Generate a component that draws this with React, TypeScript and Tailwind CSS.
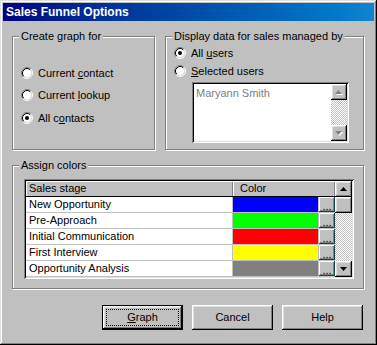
import React from 'react';

// win98 bevels
const raised =
    'shadow-[inset_-1px_-1px_0_#000,inset_1px_1px_0_#fff,inset_-2px_-2px_0_#808080,inset_2px_2px_0_#dfdfdf]';
const sunken =
    'shadow-[inset_1px_1px_0_#808080,inset_-1px_-1px_0_#fff,inset_2px_2px_0_#000,inset_-2px_-2px_0_#dfdfdf]';
const checker =
    'bg-[image:repeating-conic-gradient(#fff_0_25%,#c0c0c0_0_50%)] bg-[length:2px_2px]';

type Stage = {
    name: string;
    color: string;
};

const stages: Stage[] = [
    { name: 'New Opportunity', color: 'bg-[#0000ff]' },
    { name: 'Pre-Approach', color: 'bg-[#00ff00]' },
    { name: 'Initial Communication', color: 'bg-[#ff0000]' },
    { name: 'First Interview', color: 'bg-[#ffff00]' },
    { name: 'Opportunity Analysis', color: 'bg-[#808080]' },
];

function Radio({ checked }: { checked?: boolean }) {
    return (
        <svg width="12" height="12" viewBox="0 0 12 12" className="shrink-0">
            <circle cx="6" cy="6" r="4.5" fill="#fff" />
            <path d="M2.11 9.89A5.5 5.5 0 0 1 9.89 2.11" fill="none" stroke="#808080" />
            <path d="M9.89 2.11A5.5 5.5 0 0 1 2.11 9.89" fill="none" stroke="#fff" />
            <path d="M2.82 9.18A4.5 4.5 0 0 1 9.18 2.82" fill="none" stroke="#000" />
            <path d="M9.18 2.82A4.5 4.5 0 0 1 2.82 9.18" fill="none" stroke="#dfdfdf" />
            {checked && <circle cx="6" cy="6" r="2" fill="#000" />}
        </svg>
    );
}

function Arrow({ down, disabled }: { down?: boolean; disabled?: boolean }) {
    const d = down ? 'M0 0h7l-3.5 4z' : 'M3.5 0l3.5 4h-7z';
    return (
        <svg width="8" height="5" viewBox="0 0 8 5">
            {disabled && <path d={d} fill="#fff" transform="translate(1 1)" />}
            <path d={d} fill={disabled ? '#808080' : '#000'} />
        </svg>
    );
}

function Group({ label, className, children }: { label: React.ReactNode; className: string; children?: React.ReactNode }) {
    return (
        <div className={`relative border border-[#808080] shadow-[inset_1px_1px_0_#fff,1px_1px_0_#fff] ${className}`}>
            <span className="absolute -top-[8px] left-[6px] bg-[#c0c0c0] px-[2px] leading-[14px]">{label}</span>
            {children}
        </div>
    );
}

function RadioRow({ checked, children, className }: { checked?: boolean; children: React.ReactNode; className?: string }) {
    return (
        <div className={`flex h-[16px] items-center gap-[5px] ${className ?? ''}`}>
            <Radio checked={checked} />
            <span>{children}</span>
        </div>
    );
}

function Button({ children, isDefault }: { children: React.ReactNode; isDefault?: boolean }) {
    if (isDefault) {
        return (
            <div className="h-[25px] w-[81px] border border-black bg-[#c0c0c0]">
                <div className={`flex h-full w-full items-center justify-center p-[3px] ${raised}`}>
                    <div className="flex h-full w-full items-center justify-center border border-dotted border-black">
                        {children}
                    </div>
                </div>
            </div>
        );
    }
    return (
        <div className={`flex h-[25px] w-[81px] items-center justify-center bg-[#c0c0c0] ${raised}`}>{children}</div>
    );
}

export default function App() {
    return (
        <div
            className={`flex h-[345px] w-[377px] flex-col bg-[#c0c0c0] p-[3px] text-[11px] text-black font-['Liberation_Sans',Arial,sans-serif] shadow-[inset_-1px_-1px_0_#000,inset_1px_1px_0_#dfdfdf,inset_-2px_-2px_0_#808080,inset_2px_2px_0_#fff]`}
        >
            {/* barre de titre */}
            <div className="flex h-[18px] items-center bg-linear-to-r from-[#000080] to-[#1084d0] pl-[3px] text-[12px] font-bold text-white">
                Sales Funnel Options
            </div>

            <div className="flex flex-col pl-[9px] pr-[10px]">
                <div className="mt-[15px] flex gap-[10px]">
                    <Group label="Create graph for" className="h-[114px] w-[143px] pl-[8px] pt-[28px]">
                        <RadioRow>
                            Current <u>c</u>ontact
                        </RadioRow>
                        <RadioRow className="mt-[6px]">
                            Current <u>l</u>ookup
                        </RadioRow>
                        <RadioRow checked className="mt-[7px]">
                            All c<u>o</u>ntacts
                        </RadioRow>
                    </Group>

                    <Group label="Display data for sales managed by" className="h-[114px] w-[199px] pl-[8px] pt-[8px]">
                        <RadioRow checked>
                            All <u>u</u>sers
                        </RadioRow>
                        <RadioRow className="mt-[2px]">
                            <u>S</u>elected users
                        </RadioRow>
                        <div className={`ml-[18px] mt-[3px] flex h-[61px] w-[157px] bg-white p-[2px] ${sunken}`}>
                            <div className="flex-1 pl-[2px] pt-[1px] text-[#808080]">Maryann Smith</div>
                            <div className="flex w-[16px] flex-col">
                                <div className={`flex h-[16px] items-center justify-center bg-[#c0c0c0] ${raised}`}>
                                    <Arrow disabled />
                                </div>
                                <div className={`flex-1 ${checker}`} />
                                <div className={`flex h-[16px] items-center justify-center bg-[#c0c0c0] ${raised}`}>
                                    <Arrow down disabled />
                                </div>
                            </div>
                        </div>
                    </Group>
                </div>

                <Group
                    label={
                        <>
                            Assi<u>g</u>n colors
                        </>
                    }
                    className="mt-[15px] h-[124px] w-[352px] pl-[11px] pt-[13px]"
                >
                    <div className={`flex h-[100px] w-[330px] bg-white p-[2px] ${sunken}`}>
                        <div className="flex w-[309px] flex-col">
                            <div className="flex h-[16px] border-b border-black bg-[#c0c0c0]">
                                <div className="flex w-[207px] items-center pl-[3px] shadow-[inset_1px_1px_0_#fff,inset_-1px_0_0_#808080]">
                                    Sales stage
                                </div>
                                <div className="flex flex-1 items-center pl-[7px] shadow-[inset_1px_1px_0_#fff,inset_-1px_0_0_#808080]">
                                    Color
                                </div>
                            </div>
                            {stages.map((s) => (
                                <div key={s.name} className="flex h-[16px] border-b border-[#c0c0c0]">
                                    <div className="flex w-[207px] items-center border-r border-[#c0c0c0] pl-[3px]">
                                        {s.name}
                                    </div>
                                    <div className={`w-[85px] ${s.color}`} />
                                    <div className="w-[1px] bg-[#c0c0c0]" />
                                    <div
                                        className={`flex w-[16px] items-end justify-center bg-[#c0c0c0] pb-[1px] leading-[10px] shadow-[inset_-1px_-1px_0_#0a4a4a,inset_1px_1px_0_#fff,inset_-2px_-2px_0_#808080]`}
                                    >
                                        ...
                                    </div>
                                </div>
                            ))}
                        </div>
                        <div className="flex w-[17px] flex-col">
                            <div className={`flex h-[16px] items-center justify-center bg-[#c0c0c0] ${raised}`}>
                                <Arrow />
                            </div>
                            <div className={`h-[16px] bg-[#c0c0c0] ${raised}`} />
                            <div className={`flex-1 ${checker}`} />
                            <div className={`flex h-[16px] items-center justify-center bg-[#c0c0c0] ${raised}`}>
                                <Arrow down />
                            </div>
                        </div>
                    </div>
                </Group>

                <div className="mr-[1px] mt-[16px] flex justify-end gap-[9px]">
                    <Button isDefault>
                        <span>
                            <u>G</u>raph
                        </span>
                    </Button>
                    <Button>Cancel</Button>
                    <Button>Help</Button>
                </div>
            </div>
        </div>
    );
}
